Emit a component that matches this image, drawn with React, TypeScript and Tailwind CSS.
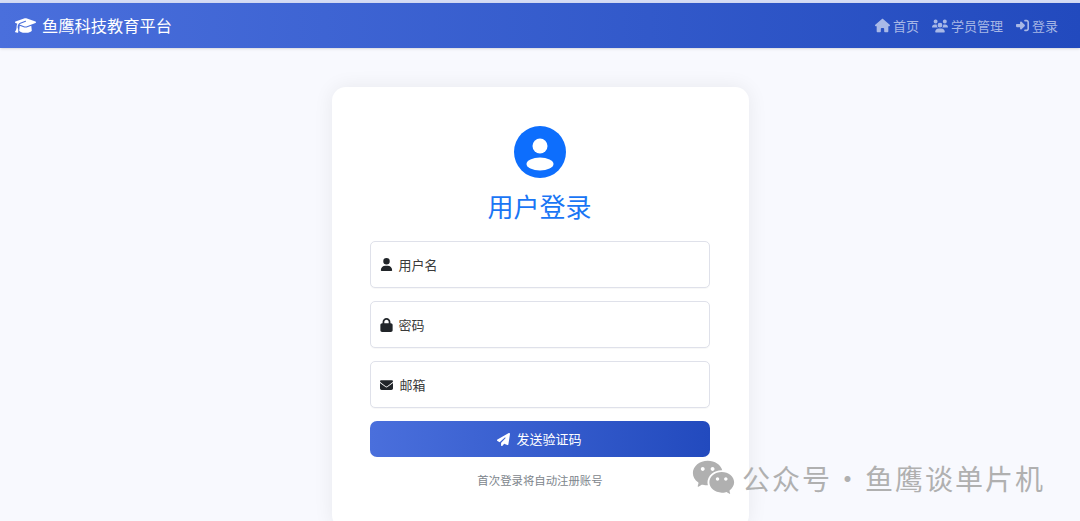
import React from 'react';
import { FaGraduationCap, FaHouse, FaUsers, FaRightToBracket, FaUser, FaLock, FaEnvelope, FaPaperPlane } from 'react-icons/fa6';
import { RiWechatFill } from 'react-icons/ri';

const font = { fontFamily: '"Noto Sans CJK SC", "Liberation Sans", sans-serif' };

function Field({ icon, label, gap }: { icon: React.ReactNode; label: string; gap: string }) {
  return (
    <div className="flex h-[47px] items-center rounded-[5px] border border-[#dfe1ea] bg-white pl-[9px] text-[13px] leading-[46px] text-[#3a3a3a] shadow-[0_1px_1px_rgba(0,0,0,0.03)]">
      <span className={`flex w-[13px] justify-center text-[#212529] ${gap}`}>{icon}</span>
      <span>{label}</span>
    </div>
  );
}

export default function App() {
  return (
    <div style={font} className="relative h-[521px] w-[1080px] overflow-hidden bg-[#f8f9fe]">
      <div className="h-[3px] bg-[#d5dcf5]" />
      {/* Navbar */}
      <header className="flex h-[45px] items-center justify-between bg-gradient-to-r from-[#4a6fdc] to-[#224abe] pl-[15px] pr-[16px] shadow-sm">
        <div className="flex items-center text-white">
          <FaGraduationCap className="mr-[6px] text-[21px]" />
          <span className="text-[16.25px]">鱼鹰科技教育平台</span>
        </div>
        <nav className="mr-[6px] flex items-center gap-[13px] text-[13px] text-white/60">
          <span className="flex items-center gap-[3px]"><FaHouse className="text-[15px]" />首页</span>
          <span className="flex items-center gap-[3px]"><FaUsers className="text-[16px]" />学员管理</span>
          <span className="flex items-center gap-[3px]"><FaRightToBracket className="text-[13px]" />登录</span>
        </nav>
      </header>

      {/* Login card */}
      <main className="flex justify-center pt-[39px]">
        <div className="flex w-[417px] flex-col rounded-[14px] bg-white pl-[38px] pr-[39px] pt-[39px] shadow-[0_0_20px_rgba(0,0,0,0.07)]">
          <div className="flex flex-col items-center">
            <svg width="52" height="52" viewBox="0 0 52 52">
              <circle cx="26" cy="26" r="26" fill="#0d6efd" />
              <circle cx="26" cy="20" r="7.5" fill="#fff" />
              <ellipse cx="26" cy="38" rx="13.5" ry="6.5" fill="#fff" />
            </svg>
            <h1 className="h-[63px] text-[26px] leading-[56px] text-[#1a76f5]">用户登录</h1>
          </div>
          <div className="flex flex-col gap-[13px]">
            <Field icon={<FaUser className="text-[13px]" />} label="用户名" gap="mr-[6px]" />
            <Field icon={<FaLock className="text-[14px]" />} label="密码" gap="mr-[6px]" />
            <Field icon={<FaEnvelope className="text-[14px]" />} label="邮箱" gap="mr-[7px]" />
          </div>
          <button className="mt-[13px] flex h-[36px] items-center justify-center gap-[6px] rounded-[7px] bg-gradient-to-r from-[#4a6fdc] to-[#224abe] text-[13px] text-white">
            <FaPaperPlane className="text-[13px]" />
            发送验证码
          </button>
          <p className="mt-[14px] pl-[1px] text-center text-[11.4px] leading-[18px] text-[#7d858c]">首次登录将自动注册账号</p>
          <div className="h-[40px]" />
        </div>
      </main>

      {/* Watermark */}
      <div className="absolute left-[691px] top-[455px] flex items-center text-[28px] tracking-[2px] text-[#b0b0b0]">
        <RiWechatFill className="text-[45px]" />
        <span className="ml-[6px]">公众号</span>
        <span className="w-[33px] text-center">·</span>
        <span>鱼鹰谈单片机</span>
      </div>
    </div>
  );
}
